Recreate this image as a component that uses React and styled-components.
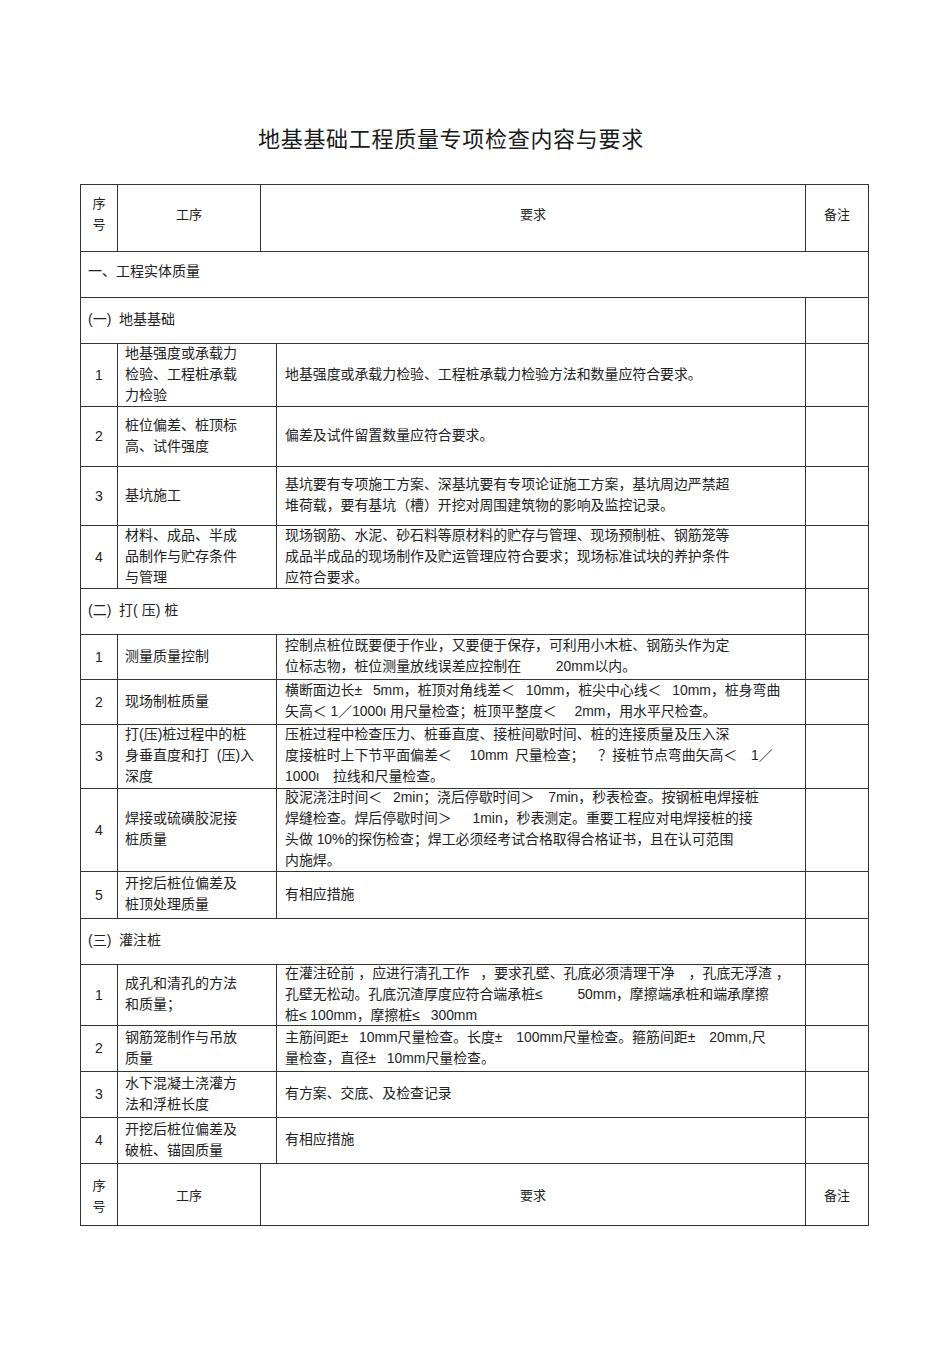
import React from 'react'
import styled, { createGlobalStyle } from 'styled-components'

const GlobalStyle = createGlobalStyle`
  * { box-sizing: border-box; }
  body {
    margin: 0;
    background: #fff;
    color: #222;
    font-family: "Liberation Sans", "Noto Sans CJK SC", sans-serif;
  }
`

const HEAD_COLS = '37px 143px 545px 62px'
const DATA_COLS = '37px 159px 529px 62px'
const SECTION_COLS = '725px 62px'

const E = '\u2003'
const N = '\u2002'

const sections = [
  {
    title: '(一)  地基基础',
    rows: [
      { h: 63, no: '1', step: ['地基强度或承载力', '检验、工程桩承载', '力检验'], req: ['地基强度或承载力检验、工程桩承载力检验方法和数量应符合要求。'] },
      { h: 60, no: '2', step: ['桩位偏差、桩顶标', '高、试件强度'], req: ['偏差及试件留置数量应符合要求。'] },
      { h: 59, no: '3', step: ['基坑施工'], req: ['基坑要有专项施工方案、深基坑要有专项论证施工方案，基坑周边严禁超', '堆荷载，要有基坑（槽）开挖对周围建筑物的影响及监控记录。'] },
      { h: 63, no: '4', step: ['材料、成品、半成', '品制作与贮存条件', '与管理'], req: ['现场钢筋、水泥、砂石料等原材料的贮存与管理、现场预制桩、钢筋笼等', '成品半成品的现场制作及贮运管理应符合要求；现场标准试块的养护条件', '应符合要求。'] },
    ],
  },
  {
    title: '(二)  打( 压) 桩',
    rows: [
      { h: 45, no: '1', step: ['测量质量控制'], req: ['控制点桩位既要便于作业，又要便于保存，可利用小木桩、钢筋头作为定', `位标志物，桩位测量放线误差应控制在${E}${E}${N}20mm以内。`] },
      { h: 45, no: '2', step: ['现场制桩质量'], req: [`横断面边长±${N} 5mm，桩顶对角线差＜${N} 10mm，桩尖中心线＜${N} 10mm，桩身弯曲`, `矢高＜ 1／1000ι 用尺量检查；桩顶平整度＜${E} 2mm，用水平尺检查。`] },
      { h: 64, no: '3', step: ['打(压)桩过程中的桩', '身垂直度和打  (压)入', '深度'], req: ['压桩过程中检查压力、桩垂直度、接桩间歇时间、桩的连接质量及压入深', `度接桩时上下节平面偏差＜${E} 10mm${N}尺量检查；${E}？接桩节点弯曲矢高＜${E}1／`, `1000ι${E}拉线和尺量检查。`] },
      { h: 83, no: '4', step: ['焊接或硫磺胶泥接', '桩质量'], req: [`胶泥浇注时间＜${N} 2min；浇后停歇时间＞${E}7min，秒表检查。按钢桩电焊接桩`, `焊缝检查。焊后停歇时间＞${E}${N}1min，秒表测定。重要工程应对电焊接桩的接`, '头做 10%的探伤检查；焊工必须经考试合格取得合格证书，且在认可范围', '内施焊。'] },
      { h: 47, no: '5', step: ['开挖后桩位偏差及', '桩顶处理质量'], req: ['有相应措施'] },
    ],
  },
  {
    title: '(三)  灌注桩',
    rows: [
      { h: 61, no: '1', step: ['成孔和清孔的方法', '和质量；'], req: [`在灌注砼前 ，应进行清孔工作${N} ，要求孔壁、孔底必须清理干净${E}，孔底无浮渣 ，`, `孔壁无松动。孔底沉渣厚度应符合端承桩≤${E}${E}${N}50mm，摩擦端承桩和端承摩擦`, `桩≤ 100mm，摩擦桩≤${N} 300mm`] },
      { h: 46, no: '2', step: ['钢筋笼制作与吊放', '质量'], req: [`主筋间距±${N} 10mm尺量检查。长度±${N}${N}100mm尺量检查。箍筋间距±${E}20mm,尺`, `量检查，直径±${N} 10mm尺量检查。`] },
      { h: 46, no: '3', step: ['水下混凝土浇灌方', '法和浮桩长度'], req: ['有方案、交底、及检查记录'] },
      { h: 46, no: '4', step: ['开挖后桩位偏差及', '破桩、锚固质量'], req: ['有相应措施'] },
    ],
  },
]

export default function App() {
  return (
    <Page>
      <GlobalStyle />
      <Title>地基基础工程质量专项检查内容与要求</Title>
      <Table>
        <HeaderRow h={67} lift={8} />
        <Row cols="1fr" h={46}>
          <Cell pad={7} lift={7}>一、工程实体质量</Cell>
        </Row>
        {sections.map(section => (
          <React.Fragment key={section.title}>
            <Row cols={SECTION_COLS} h={46}>
              <Cell pad={7} lift={3}><Line>{section.title}</Line></Cell>
              <Cell />
            </Row>
            {section.rows.map(row => (
              <Row key={section.title + row.no} cols={DATA_COLS} h={row.h}>
                <Cell align="center">{row.no}</Cell>
                <Cell pad={7} column lift={2}>
                  {row.step.map(line => <Line key={line}>{line}</Line>)}
                </Cell>
                <Cell pad={8} column small lift={2}>
                  {row.req.map(line => <Line key={line}>{line}</Line>)}
                </Cell>
                <Cell />
              </Row>
            ))}
          </React.Fragment>
        ))}
        <HeaderRow h={62} lift={-2} />
      </Table>
    </Page>
  )
}

function HeaderRow({ h, lift }) {
  return (
    <Row cols={HEAD_COLS} h={h}>
      <Cell align="center" column head lift={lift}>
        <Line>序</Line>
        <Line>号</Line>
      </Cell>
      <Cell align="center" head lift={lift}>工序</Cell>
      <Cell align="center" head lift={lift}>要求</Cell>
      <Cell align="center" head lift={lift}>备注</Cell>
    </Row>
  )
}

const Page = styled.div`
  width: 950px;
  min-height: 1345px;
  padding: 122px 0 0 80px;
`

const Title = styled.h1`
  margin: 0 0 32px 178px;
  height: 30px;
  font-family: "Noto Sans CJK SC", sans-serif;
  font-weight: 400;
  font-size: 22px;
  line-height: 30px;
  letter-spacing: 0.7px;
  color: #1a1a1a;
`

const Table = styled.div`
  width: 789px;
  border: 1px solid #333;
  border-bottom: none;
  display: flex;
  flex-direction: column;
`

const Row = styled.div`
  display: grid;
  grid-template-columns: ${p => p.cols};
  height: ${p => p.h}px;
  border-bottom: 1px solid #333;
`

const Cell = styled.div`
  display: flex;
  flex-direction: ${p => (p.column ? 'column' : 'row')};
  justify-content: ${p => (p.column ? 'center' : p.align === 'center' ? 'center' : 'flex-start')};
  align-items: ${p => (p.column ? (p.align === 'center' ? 'center' : 'flex-start') : 'center')};
  padding: 0 ${p => p.pad || 0}px;
  padding-bottom: ${p => Math.max(p.lift || 0, 0)}px;
  padding-top: ${p => Math.max(-(p.lift || 0), 0)}px;
  border-right: 1px solid #333;
  font-size: ${p => (p.head ? 13 : p.small ? 13.9 : 14)}px;
  line-height: 21px;
  overflow: hidden;
  color: #222;

  &:last-child {
    border-right: none;
  }
`

const Line = styled.div`
  white-space: pre;
`
